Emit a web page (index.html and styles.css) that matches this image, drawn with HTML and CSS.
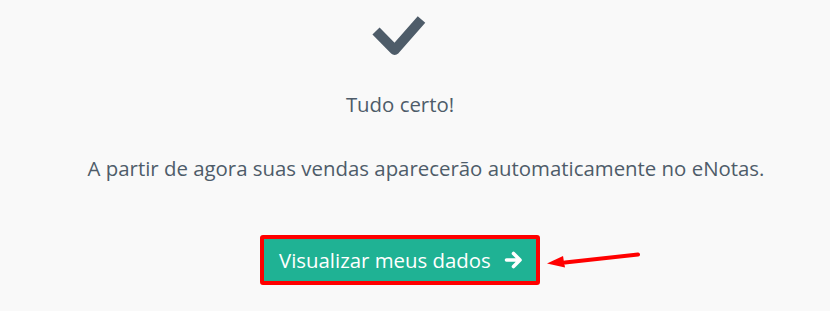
FILE: index.html
```html
<!DOCTYPE html>
<html lang="pt-BR">
<head>
<meta charset="utf-8">
<title>Tudo certo</title>
<link rel="stylesheet" href="styles.css">
</head>
<body>
<main class="page">
  <svg class="check" width="60" height="48" viewBox="0 0 60 48" aria-hidden="true">
    <polyline points="6,19 24.7,38 51.5,7.5" fill="none" stroke="#4e5c69" stroke-width="10" stroke-linejoin="round" stroke-linecap="butt"/>
  </svg>
  <p class="title">Tudo certo!</p>
  <p class="message">A partir de agora suas vendas aparecerão automaticamente no eNotas.</p>
  <div class="action">
    <a class="btn" href="#">
      <span>Visualizar meus dados</span>
      <svg class="btn-icon" width="18" height="18" viewBox="0 0 18 18" aria-hidden="true">
        <path d="M2.5 9 H15 M9.5 2.5 L16 9 L9.5 15.5" fill="none" stroke="#fff" stroke-width="3.6" stroke-linecap="round" stroke-linejoin="round"/>
      </svg>
    </a>
    <svg class="annotation" width="110" height="30" viewBox="0 0 110 30" aria-hidden="true">
      <line x1="18" y1="10.5" x2="91" y2="2.5" stroke="#ff0000" stroke-width="4" stroke-linecap="round"/>
      <polygon points="0,11.5 16,4 18,15.5" fill="#ff0000"/>
    </svg>
  </div>
</main>
</body>
</html>
```

FILE: styles.css
```css
html, body {
  margin: 0;
  padding: 0;
  background: #f9f9f9;
}

body {
  font-family: "Open Sans", "Noto Sans", sans-serif;
  font-size: 20.4px;
  color: #4e5c69;
}

.page {
  width: 800px;
  display: flex;
  flex-direction: column;
  align-items: center;
  padding-top: 12px;
}

.check {
  display: block;
}

.title {
  margin: 30px 0 0;
  line-height: 28px;
}

.message {
  margin: 36px 0 0;
  padding-left: 52px;
  line-height: 28px;
}

.action {
  position: relative;
  margin-top: 53px;
}

.btn {
  display: flex;
  align-items: center;
  gap: 13px;
  box-sizing: border-box;
  width: 280px;
  height: 50px;
  padding: 0 0 1px 15px;
  background: #1fb294;
  border: 4px solid #ff0000;
  border-radius: 3px;
  color: #fff;
  text-decoration: none;
  font-size: 20.4px;
}

.btn-icon {
  display: block;
}

.annotation {
  position: absolute;
  left: 287px;
  top: 17px;
}
```
